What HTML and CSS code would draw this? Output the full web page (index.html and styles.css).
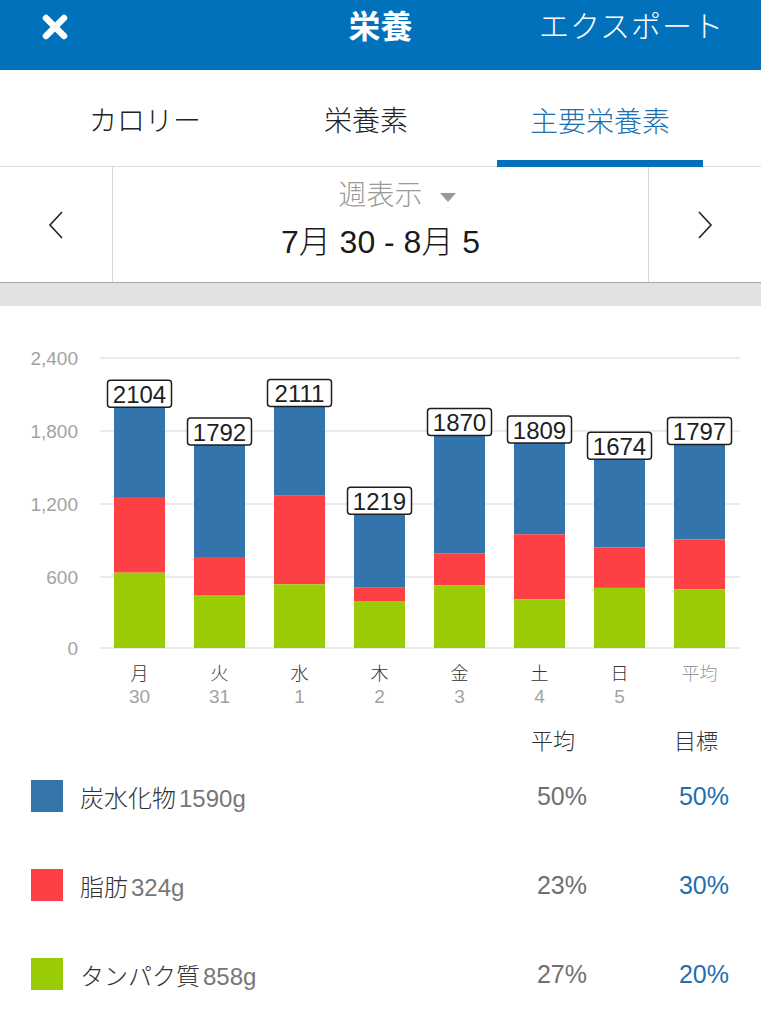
FILE: index.html
```html
<!DOCTYPE html>
<html lang="ja">
<head>
<meta charset="utf-8">
<title>栄養</title>
<link rel="stylesheet" href="styles.css">
</head>
<body>
<header class="topbar">
  <div class="topbar-left">
    <svg class="close-icon" width="26" height="26" viewBox="0 0 26 26" aria-hidden="true">
      <path d="M4 4 L22 22 M22 4 L4 22" stroke="#fff" stroke-width="6.5" stroke-linecap="round"/>
    </svg>
  </div>
  <h1 class="topbar-title">栄養</h1>
  <div class="topbar-right">エクスポート</div>
</header>

<nav class="tabs">
  <div class="tab tab-cal">カロリー</div>
  <div class="tab tab-nut">栄養素</div>
  <div class="tab tab-macro active">主要栄養素</div>
</nav>

<section class="datenav">
  <div class="datenav-arrow">
    <svg width="18" height="30" viewBox="0 0 18 30" aria-hidden="true">
      <polyline points="15,2 3,15 15,28" fill="none" stroke="#222" stroke-width="1.6"/>
    </svg>
  </div>
  <div class="datenav-center">
    <div class="datenav-mode"><span class="mode-text">週表示</span><span class="tri"></span></div>
    <div class="datenav-range">7月 30 - 8月 5</div>
  </div>
  <div class="datenav-arrow">
    <svg width="18" height="30" viewBox="0 0 18 30" aria-hidden="true">
      <polyline points="3,2 15,15 3,28" fill="none" stroke="#222" stroke-width="1.6"/>
    </svg>
  </div>
</section>
<div class="band"></div>

<section class="chart">
  <svg class="chart-svg" width="761" height="415" viewBox="0 0 761 415">
    <g class="grid">
      <line x1="100" y1="52" x2="740" y2="52"/>
      <line x1="100" y1="125" x2="740" y2="125"/>
      <line x1="100" y1="198" x2="740" y2="198"/>
      <line x1="100" y1="271" x2="740" y2="271"/>
      <line x1="100" y1="342" x2="740" y2="342"/>
    </g>
    <g class="ylabels">
      <text x="78" y="52">2,400</text>
      <text x="78" y="125">1,800</text>
      <text x="78" y="198">1,200</text>
      <text x="78" y="271">600</text>
      <text x="78" y="342">0</text>
    </g>
    <g class="bars">
      <rect class="carb" x="114" y="87.8" width="51" height="103.2"/>
      <rect class="fat" x="114" y="191" width="51" height="75.7"/>
      <rect class="prot" x="114" y="266.7" width="51" height="75.3"/>

      <rect class="carb" x="194" y="125.5" width="51" height="125.5"/>
      <rect class="fat" x="194" y="251" width="51" height="38"/>
      <rect class="prot" x="194" y="289" width="51" height="53"/>

      <rect class="carb" x="274" y="86.9" width="51" height="102.8"/>
      <rect class="fat" x="274" y="189.7" width="51" height="88.6"/>
      <rect class="prot" x="274" y="278.3" width="51" height="63.7"/>

      <rect class="carb" x="354" y="194.7" width="51" height="87"/>
      <rect class="fat" x="354" y="281.7" width="51" height="13.3"/>
      <rect class="prot" x="354" y="295" width="51" height="47"/>

      <rect class="carb" x="434" y="116" width="51" height="131.6"/>
      <rect class="fat" x="434" y="247.6" width="51" height="31.7"/>
      <rect class="prot" x="434" y="279.3" width="51" height="62.7"/>

      <rect class="carb" x="514" y="123.4" width="51" height="104.9"/>
      <rect class="fat" x="514" y="228.3" width="51" height="65"/>
      <rect class="prot" x="514" y="293.3" width="51" height="48.7"/>

      <rect class="carb" x="594" y="139.7" width="51" height="101.6"/>
      <rect class="fat" x="594" y="241.3" width="51" height="40.6"/>
      <rect class="prot" x="594" y="281.9" width="51" height="60.1"/>

      <rect class="carb" x="674" y="124.9" width="51" height="108.4"/>
      <rect class="fat" x="674" y="233.3" width="51" height="50"/>
      <rect class="prot" x="674" y="283.3" width="51" height="58.7"/>
    </g>
    <g class="vlabels">
      <rect x="107.5" y="74.3" width="64" height="27" rx="3"/>
      <text x="139.5" y="88.6">2104</text>
      <rect x="187.5" y="112" width="64" height="27" rx="3"/>
      <text x="219.5" y="126.3">1792</text>
      <rect x="267.5" y="73.4" width="64" height="27" rx="3"/>
      <text x="299.5" y="87.7">2111</text>
      <rect x="347.5" y="181.2" width="64" height="27" rx="3"/>
      <text x="379.5" y="195.5">1219</text>
      <rect x="427.5" y="102.5" width="64" height="27" rx="3"/>
      <text x="459.5" y="116.8">1870</text>
      <rect x="507.5" y="109.9" width="64" height="27" rx="3"/>
      <text x="539.5" y="124.2">1809</text>
      <rect x="587.5" y="126.2" width="64" height="27" rx="3"/>
      <text x="619.5" y="140.5">1674</text>
      <rect x="667.5" y="111.4" width="64" height="27" rx="3"/>
      <text x="699.5" y="125.7">1797</text>
    </g>
    <g class="xdays">
      <text x="139.5" y="365.5">月</text>
      <text x="219.5" y="365.5">火</text>
      <text x="299.5" y="365.5">水</text>
      <text x="379.5" y="365.5">木</text>
      <text x="459.5" y="365.5">金</text>
      <text x="539.5" y="365.5">土</text>
      <text x="619.5" y="365.5">日</text>
      <text class="avg" x="699.5" y="365.5">平均</text>
    </g>
    <g class="xdates">
      <text x="139.5" y="390">30</text>
      <text x="219.5" y="390">31</text>
      <text x="299.5" y="390">1</text>
      <text x="379.5" y="390">2</text>
      <text x="459.5" y="390">3</text>
      <text x="539.5" y="390">4</text>
      <text x="619.5" y="390">5</text>
    </g>
  </svg>
</section>

<section class="legend">
  <div class="legend-head">
    <div class="lh-spacer"></div>
    <div class="lh-avg">平均</div>
    <div class="lh-goal">目標</div>
  </div>
  <div class="legend-row">
    <span class="swatch sw-carb"></span>
    <div class="lr-label">炭水化物<span class="grams">1590g</span></div>
    <div class="lr-avg">50%</div>
    <div class="lr-goal">50%</div>
  </div>
  <div class="legend-row">
    <span class="swatch sw-fat"></span>
    <div class="lr-label">脂肪<span class="grams">324g</span></div>
    <div class="lr-avg">23%</div>
    <div class="lr-goal">30%</div>
  </div>
  <div class="legend-row">
    <span class="swatch sw-prot"></span>
    <div class="lr-label">タンパク質<span class="grams">858g</span></div>
    <div class="lr-avg">27%</div>
    <div class="lr-goal">20%</div>
  </div>
</section>
</body>
</html>
```

FILE: styles.css
```css
* { box-sizing: border-box; }

html, body {
  margin: 0;
  padding: 0;
  background: #fff;
}

body {
  width: 761px;
  font-family: "Liberation Sans", "Noto Sans CJK JP", sans-serif;
  color: #222;
}

/* top bar */
.topbar {
  height: 70px;
  background: #0271bb;
  display: grid;
  grid-template-columns: 1fr auto 1fr;
  align-items: center;
  padding-bottom: 16px;
  color: #fff;
}
.topbar-left {
  padding-left: 42px;
  display: flex;
  align-items: center;
}
.close-icon { display: block; }
.topbar-title {
  margin: 0;
  font-size: 32px;
  font-weight: bold;
  line-height: 1;
}
.topbar-right {
  justify-self: end;
  padding-right: 37px;
  font-size: 30px;
  line-height: 1;
  letter-spacing: 1px;
  font-weight: 300;
}

/* tabs */
.tabs {
  height: 97px;
  display: flex;
  border-bottom: 1px solid #dcdcdc;
}
.tab {
  display: flex;
  align-items: center;
  justify-content: center;
  font-size: 28px;
  font-weight: 300;
  color: #222;
  padding-top: 2px;
}
.tab-cal { width: 290px; }
.tab-nut { width: 152px; }
.tab-macro {
  width: 206px;
  margin-left: 55px;
}
.tab.active {
  color: #1e6fb0;
  border-bottom: 7px solid #0270ba;
  margin-bottom: -1px;
  padding-top: 9px;
}

/* date navigation */
.datenav {
  height: 116px;
  display: flex;
  border-bottom: 1px solid #a8a8a8;
}
.datenav-arrow {
  width: 113px;
  display: flex;
  align-items: center;
  justify-content: center;
}
.datenav-arrow:first-child { border-right: 1px solid #d8d8d8; }
.datenav-arrow:last-child { border-left: 1px solid #d8d8d8; }
.datenav-center {
  flex: 1;
  display: flex;
  flex-direction: column;
  align-items: center;
  padding-top: 12px;
}
.datenav-mode {
  font-size: 28px;
  font-weight: 300;
  color: #9a9a9a;
  line-height: 34px;
  display: flex;
  align-items: center;
  gap: 17px;
}
.datenav-mode::before {
  content: "";
  width: 16px;
}
.tri {
  width: 0;
  height: 0;
  border-left: 8px solid transparent;
  border-right: 8px solid transparent;
  border-top: 9px solid #9a9a9a;
  margin-top: 2px;
}
.datenav-range {
  margin-top: 12px;
  font-size: 32px;
  line-height: 34px;
  color: #1a1a1a;
  font-weight: 300;
}
.band {
  height: 23px;
  background: #e2e2e2;
}

/* chart */
.chart { height: 415px; }
.chart-svg { display: block; }
.grid line {
  stroke: #e3e3e3;
  stroke-width: 1.5;
}
.ylabels text {
  font-family: "Liberation Sans", sans-serif;
  font-size: 19px;
  fill: #a2a2a2;
  text-anchor: end;
  dominant-baseline: central;
}
.carb { fill: #3274ab; }
.fat { fill: #fd4044; }
.prot { fill: #9bcb04; }
.vlabels rect {
  fill: #fff;
  stroke: #1e1e1e;
  stroke-width: 1.5;
}
.vlabels text {
  font-family: "Liberation Sans", sans-serif;
  font-size: 24px;
  fill: #1e1e1e;
  text-anchor: middle;
  dominant-baseline: central;
}
.xdays text {
  font-family: "Noto Sans CJK JP", sans-serif;
  font-size: 18px;
  font-weight: 300;
  fill: #333;
  text-anchor: middle;
  dominant-baseline: central;
}
.xdays text.avg { fill: #999; }
.xdates text {
  font-family: "Liberation Sans", sans-serif;
  font-size: 19px;
  fill: #a2a2a2;
  text-anchor: middle;
  dominant-baseline: central;
}

/* legend */
.legend {
  padding: 0 7px 0 31px;
}
.legend-head {
  height: 42px;
  display: flex;
  align-items: center;
  font-size: 22px;
  font-weight: 300;
  color: #333;
  padding-bottom: 7px;
}
.lh-spacer { flex: 1; }
.lh-avg {
  width: 100px;
  text-align: center;
  padding-right: 18px;
}
.lh-goal {
  width: 100px;
  margin-left: 42px;
  text-align: center;
  padding-right: 16px;
}
.legend-row {
  height: 66px;
  margin-bottom: 23px;
  display: flex;
  align-items: center;
}
.swatch {
  width: 32px;
  height: 32px;
  margin-right: 17px;
  flex: none;
}
.sw-carb { background: #3575ab; }
.sw-fat { background: #fc4045; }
.sw-prot { background: #9acc05; }
.lr-label {
  flex: 1;
  font-size: 24px;
  font-weight: 300;
  color: #333;
}
.grams {
  margin-left: 3px;
  font-size: 24px;
  color: #777;
}
.lr-avg {
  width: 100px;
  text-align: center;
  font-size: 25px;
  color: #707070;
}
.lr-goal {
  width: 100px;
  margin-left: 42px;
  text-align: center;
  font-size: 25px;
  color: #1f6fae;
}
```
